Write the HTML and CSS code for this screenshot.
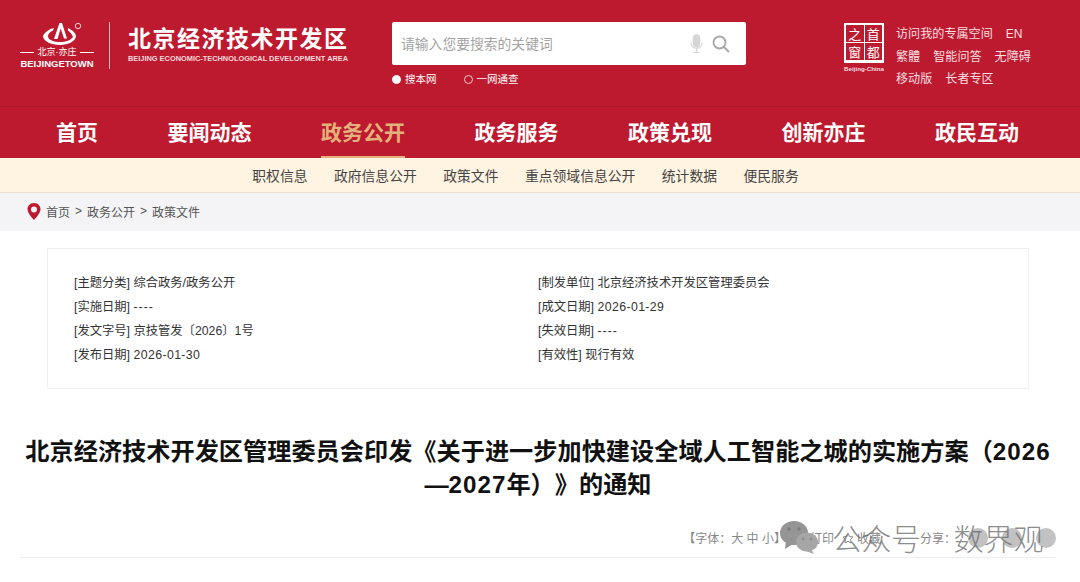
FILE: index.html
```html
<!DOCTYPE html>
<html lang="zh">
<head>
    <meta charset="UTF-8">
    <meta name="viewport" content="width=device-width, initial-scale=1.0">
    <title>北京经济技术开发区</title>
    <link rel="stylesheet" href="styles.css">
</head>
<body>
    <header class="top">
        <div class="logo">
            <div class="logo-mark">
                <svg class="logo-sign" width="44" height="24" viewBox="0 0 44 24">
                    <path d="M4 14C6 10 10 7 15 6L14 8.500C11 9.500 9 12 9 14C9 18 15 20 21 20C27 20 32 18 34 15C33 12 31 10 29 8.500L29 6C33 8 37 11 37 14C37 19 29 23 21 23C12 23 4 19 4 14Z" fill="#fff"/>
                    <path d="M15 17L20.500 1H23L28 16.500H25L21.700 6.500L18.500 17Z" fill="#fff"/>
                    <circle cx="39" cy="4" r="2.700" fill="none" stroke="#fff" stroke-width="0.800"/>
                </svg>
                <div class="logo-cn"><i></i>北京·亦庄<i></i></div>
                <div class="logo-en">BEIJINGETOWN</div>
            </div>
            <div class="logo-line"></div>
            <div class="logo-name">
                <div class="logo-title">北京经济技术开发区</div>
                <div class="logo-sub">BEIJING ECONOMIC-TECHNOLOGICAL DEVELOPMENT AREA</div>
            </div>
        </div>

        <div class="search">
            <div class="search-box">
                <span class="search-hint">请输入您要搜索的关键词</span>
                <svg width="13" height="19" viewBox="0 0 14 20">
                    <rect x="3" y="0" width="8" height="14" rx="4" fill="#d6d6d6"/>
                    <path d="M1 9C1 13 4 15 7 15S13 13 13 9M7 15V19M4 19.500H10" fill="none" stroke="#d6d6d6" stroke-width="1.200"/>
                </svg>
                <svg width="18" height="18" viewBox="0 0 18 18">
                    <circle cx="7.500" cy="7.500" r="6" fill="none" stroke="#a8a8a8" stroke-width="1.800"/>
                    <path d="M12 12L17 17" stroke="#a8a8a8" stroke-width="2"/>
                </svg>
            </div>
            <div class="search-opts">
                <span class="opt"><i class="dot on"></i>搜本网</span>
                <span class="opt"><i class="dot"></i>一网通查</span>
            </div>
        </div>

        <div class="capital">
            <div class="seal-grid">
                <span>之</span><span>首</span>
                <span>窗</span><span>都</span>
            </div>
            <div class="seal-en">Beijing-China</div>
        </div>
        <div class="links">
            <div class="links-row"><span>访问我的专属空间</span><span>EN</span></div>
            <div class="links-row"><span>繁體</span><span>智能问答</span><span>无障碍</span></div>
            <div class="links-row"><span>移动版</span><span>长者专区</span></div>
        </div>
    </header>

    <nav class="nav">
        <a>首页</a>
        <a>要闻动态</a>
        <a class="active">政务公开</a>
        <a>政务服务</a>
        <a>政策兑现</a>
        <a>创新亦庄</a>
        <a>政民互动</a>
    </nav>

    <div class="subnav">
        <a>职权信息</a>
        <a>政府信息公开</a>
        <a>政策文件</a>
        <a>重点领域信息公开</a>
        <a>统计数据</a>
        <a>便民服务</a>
    </div>

    <div class="crumb">
        <svg width="14" height="17" viewBox="0 0 14 17">
            <path fill-rule="evenodd" d="M7 0C3 0 .5 3 .5 6.300C.5 10.500 7 17 7 17S13.500 10.500 13.500 6.300C13.500 3 11 0 7 0ZM7 3.500A3 3 0 1 1 7 9.500A3 3 0 1 1 7 3.500Z" fill="#be1a2f"/>
        </svg>
        <span>首页</span><span>&gt;</span><span>政务公开</span><span>&gt;</span><span>政策文件</span>
    </div>

    <section class="info">
        <div class="info-col">
            <p>[主题分类] 综合政务/政务公开</p>
            <p>[实施日期] <span class="dash">----</span></p>
            <p>[发文字号] 京技管发〔2026〕1号</p>
            <p>[发布日期] <span class="num">2026-01-30</span></p>
        </div>
        <div class="info-col">
            <p>[制发单位] 北京经济技术开发区管理委员会</p>
            <p>[成文日期] <span class="num">2026-01-29</span></p>
            <p>[失效日期] <span class="dash">----</span></p>
            <p>[有效性] 现行有效</p>
        </div>
    </section>

    <h1 class="title">北京经济技术开发区管理委员会印发《关于进一步加快建设全域人工智能之城的实施方案（<span class="year">2026</span>—<span class="year">2027</span>年）》的通知</h1>

    <div class="tools">
        <span class="tool-font">【字体：大 中 小】</span>
        <span class="tool">
            <svg width="15" height="14" viewBox="0 0 15 14">
                <path d="M4 4V1H11V4M2 11H1V5H14V11H13M4 8H11V13H4Z" fill="none" stroke="#888" stroke-width="1.200"/>
            </svg>
            打印
        </span>
        <span class="tool">
            <svg width="12" height="12" viewBox="0 0 12 12">
                <path d="M6 1L7.500 4.500L11 5L8.500 7.500L9 11L6 9.200L3 11L3.500 7.500L1 5L4.500 4.500Z" fill="none" stroke="#888"/>
            </svg>
            收藏
        </span>
        <span class="tool-share">分享：</span>
        <i class="share"></i><i class="share"></i><i class="share"></i>
    </div>

    <div class="watermark">
        <svg width="38" height="33" viewBox="0 0 38 33">
            <ellipse cx="14" cy="12" rx="14" ry="12" fill="#959595"/>
            <path d="M6 20L5 28L13 23Z" fill="#959595"/>
            <ellipse cx="27" cy="21" rx="11" ry="9.500" fill="#a6a6a6"/>
            <path d="M31 28L34 33L26 30Z" fill="#a6a6a6"/>
            <circle cx="9" cy="8" r="1.800" fill="#7d7d7d"/><circle cx="19" cy="8" r="1.800" fill="#7d7d7d"/>
            <circle cx="23" cy="18" r="1.400" fill="#8a8a8a"/><circle cx="31" cy="18" r="1.400" fill="#8a8a8a"/>
        </svg>
        <span class="wm-a">公众号</span>
        <span class="wm-b">数界观</span>
    </div>
</body>
</html>
```

FILE: styles.css
```css
* {
    box-sizing: border-box;
}
html, body {
    height: 582px;
    overflow: hidden;
}
body {
    position: relative;
    margin: 0;
    font-family: "Liberation Sans", "Noto Sans CJK SC", sans-serif;
    background: white;
    color: #444;
}
.top {
    display: flex;
    height: 106px;
    background: #be1a2f;
    padding: 22px 0 0 20px;
    color: white;
}
.logo {
    display: flex;
    width: 372px;
    height: 48px;
}
.logo-mark {
    width: 74px;
    text-align: center;
}
.logo-sign {
    display: block;
    margin-left: 19px;
}
.logo-cn {
    display: flex;
    align-items: center;
    justify-content: space-between;
    font-size: 9px;
    line-height: 11px;
    margin-top: 1px;
}
.logo-cn i {
    width: 14px;
    height: 1px;
    background: white;
}
.logo-en {
    font-size: 9.500px;
    line-height: 12px;
    font-weight: bold;
    white-space: nowrap;
}
.logo-line {
    width: 1px;
    height: 47px;
    margin: 0 18px 0 15px;
    background: rgba(255,255,255,0.7);
}
.logo-name {
    padding-top: 6px;
}
.logo-title {
    font-size: 23px;
    line-height: 23px;
    font-weight: bold;
    letter-spacing: 1.500px;
    white-space: nowrap;
}
.logo-sub {
    font-size: 7.400px;
    line-height: 10px;
    margin-top: 3px;
    font-weight: bold;
    white-space: nowrap;
    color: #f6d9dc;
}
.search {
    width: 354px;
}
.search-box {
    display: flex;
    align-items: center;
    gap: 9px;
    height: 43px;
    padding: 0 16px 0 9px;
    background: white;
    border-radius: 2px;
}
.search-hint {
    flex: 1;
    padding-bottom: 2px;
    font-size: 13.800px;
    color: #a3a3a3;
}
.search-opts {
    display: flex;
    gap: 27px;
    margin-top: 6px;
    font-size: 10.500px;
    line-height: 17px;
}
.opt {
    display: flex;
    align-items: center;
    gap: 4px;
}
.dot {
    width: 9px;
    height: 9px;
    border: 1px solid #f6c4ca;
    border-radius: 50%;
}
.dot.on {
    background: white;
    border-color: white;
}
.capital {
    width: 52px;
    margin-left: 98px;
}
.seal-grid {
    display: grid;
    grid-template-columns: 1fr 1fr;
    grid-auto-rows: 17px;
    gap: 1px;
    width: 40px;
    height: 40px;
    margin-top: 1px;
    padding: 2px;
    background: white;
    font-size: 13px;
    line-height: 17px;
    text-align: center;
    color: white;
}
.seal-grid span {
    background: #be1a2f;
    font-family: "Noto Sans CJK SC", sans-serif;
}
.seal-en {
    width: 40px;
    font-size: 6.200px;
    line-height: 9px;
    margin-top: 1px;
    text-align: center;
    white-space: nowrap;
    color: #f7dfe1;
    font-weight: bold;
}
.links {
    padding-top: 1px;
    font-size: 12.100px;
    line-height: 22.500px;
    color: #f7dfe1;
}
.links-row {
    display: flex;
    gap: 13px;
    white-space: nowrap;
}
.nav {
    display: flex;
    justify-content: space-between;
    height: 52px;
    padding: 0 61px 0 56px;
    background: #be1a2f;
    border-top: 1px solid #ad1729;
}
.nav a {
    height: 51px;
    font-size: 21px;
    line-height: 51px;
    font-weight: bold;
    color: white;
}
.nav a.active {
    color: #e3b27c;
    border-bottom: 2px solid #e3b27c;
}
.subnav {
    display: flex;
    justify-content: center;
    gap: 26.500px;
    height: 35px;
    padding-right: 29px;
    background: #fff3e1;
    border-bottom: 1px solid #efdfc8;
    font-size: 13.800px;
    line-height: 37px;
    color: #444;
}
.crumb {
    display: flex;
    align-items: center;
    gap: 5px;
    height: 38px;
    padding: 0 0 2px 27px;
    background: #f4f4f6;
    font-size: 12px;
    color: #555;
}
.info {
    display: flex;
    width: 982px;
    height: 141px;
    margin: 17px 0 0 47px;
    padding: 22px 26px;
    border: 1px solid #efefef;
}
.info-col {
    width: 466px;
    font-size: 12.300px;
    line-height: 24px;
    color: #333;
}
.info-col p {
    margin: 0;
}
.num {
    letter-spacing: 0.400px;
}
.dash {
    letter-spacing: 1px;
}
.title {
    margin: 46px 22px 0 18px;
    font-size: 24.200px;
    line-height: 33px;
    font-weight: bold;
    text-align: center;
    text-spacing-trim: space-all;
    color: #111;
}
.year {
    letter-spacing: 1px;
}
.tools {
    display: flex;
    align-items: center;
    justify-content: flex-end;
    gap: 14px;
    height: 40px;
    margin: 17px 24px 0 20px;
    border-bottom: 1px solid #eee;
    font-size: 12px;
    color: #888;
}
.tool {
    display: flex;
    align-items: center;
    gap: 3px;
    margin-left: -6px;
}
.tool-font {
    margin-right: -2px;
}
.tool-share {
    margin: 0 -2px 0 25px;
}
.share {
    width: 20px;
    height: 20px;
    border-radius: 50%;
    background: #c2c2c2;
}
/* watermark sits on top of the tool row */
.watermark {
    position: absolute;
    left: 780px;
    top: 518px;
    display: flex;
    align-items: center;
}
.wm-a, .wm-b {
    font-size: 30px;
    line-height: 38px;
    color: rgba(110,110,110,0.8);
    font-family: "Noto Sans CJK SC", sans-serif;
    font-weight: 300;
}
.wm-a {
    margin-left: 14px;
    letter-spacing: -0.500px;
}
.wm-b {
    margin-left: 33px;
}
```
